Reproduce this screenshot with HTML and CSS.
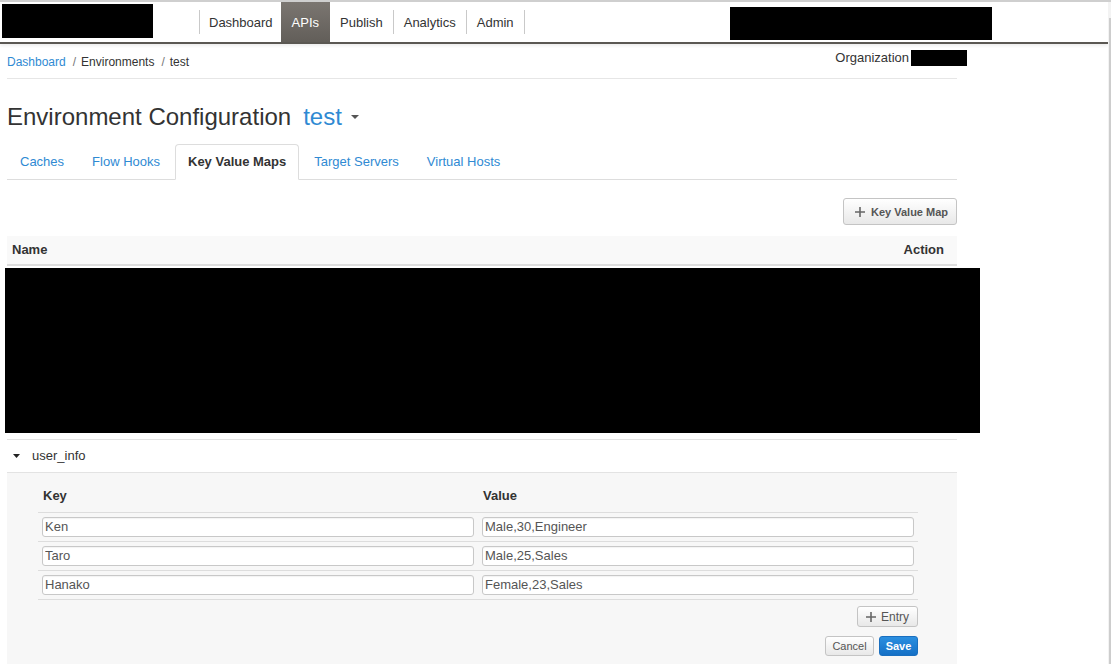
FILE: index.html
```html
<!DOCTYPE html>
<html>
<head>
<meta charset="utf-8">
<title>Environment Configuration</title>
<link rel="stylesheet" href="styles.css">
</head>
<body>
<div class="app">
  <div class="page">
    <header class="header">
      <div class="logo"></div>
      <ul class="nav">
        <li class="nav-item first">Dashboard</li>
        <li class="nav-item active">APIs</li>
        <li class="nav-item sep">Publish</li>
        <li class="nav-item sep">Analytics</li>
        <li class="nav-item sep">Admin</li>
      </ul>
      <div class="user-box"></div>
    </header>

    <main class="content">
      <div class="crumbs-row">
        <div class="crumbs">
          <a class="crumb-link">Dashboard</a><span class="crumb-sep">/</span><span>Environments</span><span class="crumb-sep">/</span><span>test</span>
        </div>
        <div class="org"><span>Organization</span><span class="org-box"></span></div>
      </div>

      <h1 class="title">Environment Configuration<span class="env">test</span><svg class="caret" width="8" height="4" viewBox="0 0 8 4"><path d="M0 0h8L4 4z" fill="#555"/></svg></h1>

      <ul class="tabs">
        <li class="tab">Caches</li>
        <li class="tab">Flow Hooks</li>
        <li class="tab active">Key Value Maps</li>
        <li class="tab">Target Servers</li>
        <li class="tab">Virtual Hosts</li>
      </ul>

      <div class="toolbar">
        <button class="btn btn-kvm"><svg class="plus" width="10" height="10" viewBox="0 0 10 10"><path d="M5 0v10M0 5h10" stroke="#666" stroke-width="1.6"/></svg><span>Key Value Map</span></button>
      </div>

      <div class="list-head">
        <span>Name</span>
        <span>Action</span>
      </div>

      <div class="redacted"></div>

      <div class="kvm-row">
        <svg class="tri" width="7" height="4" viewBox="0 0 7 4"><path d="M0 0h7L3.5 4z" fill="#222"/></svg>
        <span>user_info</span>
      </div>

      <div class="panel">
        <table class="entries">
          <thead>
            <tr><th>Key</th><th>Value</th></tr>
          </thead>
          <tbody>
            <tr><td><input class="field" value="Ken"></td><td><input class="field" value="Male,30,Engineer"></td></tr>
            <tr><td><input class="field" value="Taro"></td><td><input class="field" value="Male,25,Sales"></td></tr>
            <tr><td><input class="field" value="Hanako"></td><td><input class="field" value="Female,23,Sales"></td></tr>
          </tbody>
        </table>
        <div class="panel-actions">
          <button class="btn btn-entry"><svg class="plus" width="10" height="10" viewBox="0 0 10 10"><path d="M5 0v10M0 5h10" stroke="#666" stroke-width="1.6"/></svg><span>Entry</span></button>
          <div class="save-row">
            <button class="btn btn-cancel">Cancel</button>
            <button class="btn btn-save">Save</button>
          </div>
        </div>
      </div>
    </main>
  </div>
  <div class="rail"></div>
</div>
</body>
</html>
```

FILE: styles.css
```css
* { box-sizing: border-box; }
html, body { margin: 0; padding: 0; background: #fff; }
body {
  font-family: "Liberation Sans", Arial, sans-serif;
  color: #333;
  font-size: 13px;
  overflow: hidden;
  height: 664px;
}
.app {
  display: flex;
  border-top: 2px solid #cfcfcf;
  height: 664px;
}
.page { flex: 0 0 1108px; }
.rail {
  flex: 1;
  background: #f3f3f3;
  padding-top: 16px;
}
.rail::before {
  content: "";
  display: block;
  margin-left: 1px;
  width: 2px;
  height: 100%;
  background: #cdcdcd;
}

/* header */
.header {
  display: flex;
  height: 42px;
  border-bottom: 2px solid #5b5853;
  box-shadow: 0 2px 3px rgba(0,0,0,0.07);
  padding-left: 2px;
}
.logo {
  width: 151px;
  height: 34px;
  margin-top: 2px;
  background: #000;
}
.nav {
  display: flex;
  list-style: none;
  margin: 0 0 0 46px;
  padding: 0;
  align-items: stretch;
}
.nav::before {
  content: "";
  width: 1px;
  height: 24px;
  align-self: center;
  background: #c9c9c9;
}
.nav-item {
  display: flex;
  align-items: center;
  padding: 0 10px;
  font-size: 13px;
  color: #333;
}
.nav-item.first { padding: 0 8px 0 9px; }
.nav-item.active {
  background: linear-gradient(#7b7671, #625e59);
  color: #fff;
  padding: 0 11px;
}
.nav-item.sep { position: relative; margin-right: 1px; }
.nav-item.sep::after {
  content: "";
  position: absolute;
  right: -1px;
  top: 8px;
  width: 1px;
  height: 24px;
  background: #c9c9c9;
}
.user-box {
  width: 262px;
  height: 33px;
  margin: 5px 116px 0 auto;
  background: #000;
}

/* content */
.content {
  margin-left: 7px;
  width: 950px;
}
.crumbs-row {
  display: flex;
  justify-content: space-between;
  align-items: flex-start;
  padding: 10px 0 7px;
  border-bottom: 1px solid #e6e6e6;
}
.crumbs {
  font-size: 12px;
  line-height: 17px;
  color: #333;
}
.crumb-link { color: #2f8ad3; }
.crumb-sep { color: #777; margin: 0 5px 0 7px; }
.org {
  display: flex;
  align-items: center;
  margin-top: -4px;
  margin-right: -10px;
  font-size: 13px;
  line-height: 16px;
}
.org-box {
  width: 56px;
  height: 16px;
  margin-left: 2px;
  background: #000;
}
.title {
  margin: 23px 0 0;
  font-size: 24px;
  font-weight: normal;
  line-height: 30px;
  color: #333;
  display: flex;
  align-items: center;
}
.env {
  margin-left: 12px;
  color: #2f8ad3;
  font-size: 24px;
}
.caret { margin-left: 9px; margin-top: 0; }

/* tabs */
.tabs {
  display: flex;
  list-style: none;
  margin: 12px 0 0;
  padding: 0;
  border-bottom: 1px solid #ddd;
}
.tab {
  margin: 0 2px -1px 0;
  padding: 9px 12px;
  line-height: 16px;
  font-size: 13px;
  color: #2f8ad3;
  border: 1px solid transparent;
  border-radius: 4px 4px 0 0;
}
.tab.active {
  color: #333;
  font-weight: bold;
  background: #fff;
  border-color: #ddd #ddd #fff;
}

/* buttons */
.btn {
  display: inline-flex;
  align-items: center;
  font-family: "Liberation Sans", Arial, sans-serif;
  border: 1px solid #c4c4c4;
  border-radius: 3px;
  background: linear-gradient(#ffffff, #e8e8e8);
  color: #555;
  padding: 0 7px;
  margin: 0;
  cursor: pointer;
}
.plus { flex: none; }
.toolbar {
  display: flex;
  justify-content: flex-end;
  margin-top: 18px;
}
.btn-kvm {
  height: 27px;
  width: 114px;
  padding: 0 0 0 11px;
  font-size: 11px;
  font-weight: bold;
  gap: 6px;
}

/* list */
.list-head {
  display: flex;
  justify-content: space-between;
  margin-top: 11px;
  height: 30px;
  padding: 0 13px 0 5px;
  background: #f9f9f9;
  border-bottom: 2px solid #ddd;
  font-size: 13px;
  font-weight: bold;
  line-height: 28px;
}
.redacted {
  margin: 2px 0 0 -2px;
  width: 975px;
  height: 165px;
  background: #000;
}
.kvm-row {
  display: flex;
  align-items: center;
  margin-top: 6px;
  height: 34px;
  padding-left: 6px;
  padding-bottom: 1px;
  border-top: 1px solid #e3e3e3;
  border-bottom: 1px solid #e3e3e3;
  font-size: 13px;
  color: #333;
  gap: 12px;
}

/* panel */
.panel {
  background: #f7f7f7;
  padding: 7px 39px 20px 31px;
}
.entries {
  width: 100%;
  border-collapse: collapse;
  table-layout: fixed;
}
.entries th {
  text-align: left;
  padding: 8px 5px;
  line-height: 16px;
  font-size: 13px;
  font-weight: bold;
  color: #333;
  border-bottom: 1px solid #ddd;
}
.entries td {
  padding: 4px;
  border-bottom: 1px solid #ddd;
}
.field {
  display: block;
  width: 100%;
  height: 20px;
  margin: 0;
  padding: 0 2px 1px;
  border: 1px solid #c8c8c8;
  border-radius: 3px;
  background: #fff;
  font-family: "Liberation Sans", Arial, sans-serif;
  font-size: 13px;
  color: #555;
  box-shadow: inset 0 1px 1px rgba(0,0,0,0.05);
}
.panel-actions {
  display: flex;
  flex-direction: column;
  align-items: flex-end;
  margin-top: 6px;
  gap: 9px;
}
.btn-entry {
  height: 21px;
  padding: 0 8px;
  font-size: 12px;
  gap: 5px;
}
.save-row {
  display: flex;
  gap: 5px;
}
.btn-cancel {
  height: 20px;
  width: 49px;
  justify-content: center;
  font-size: 11px;
  color: #555;
}
.btn-save {
  height: 20px;
  width: 39px;
  justify-content: center;
  font-size: 11px;
  font-weight: bold;
  color: #fff;
  border-color: #1a6fbf;
  background: linear-gradient(#2b8fe0, #1570c6);
}
```
